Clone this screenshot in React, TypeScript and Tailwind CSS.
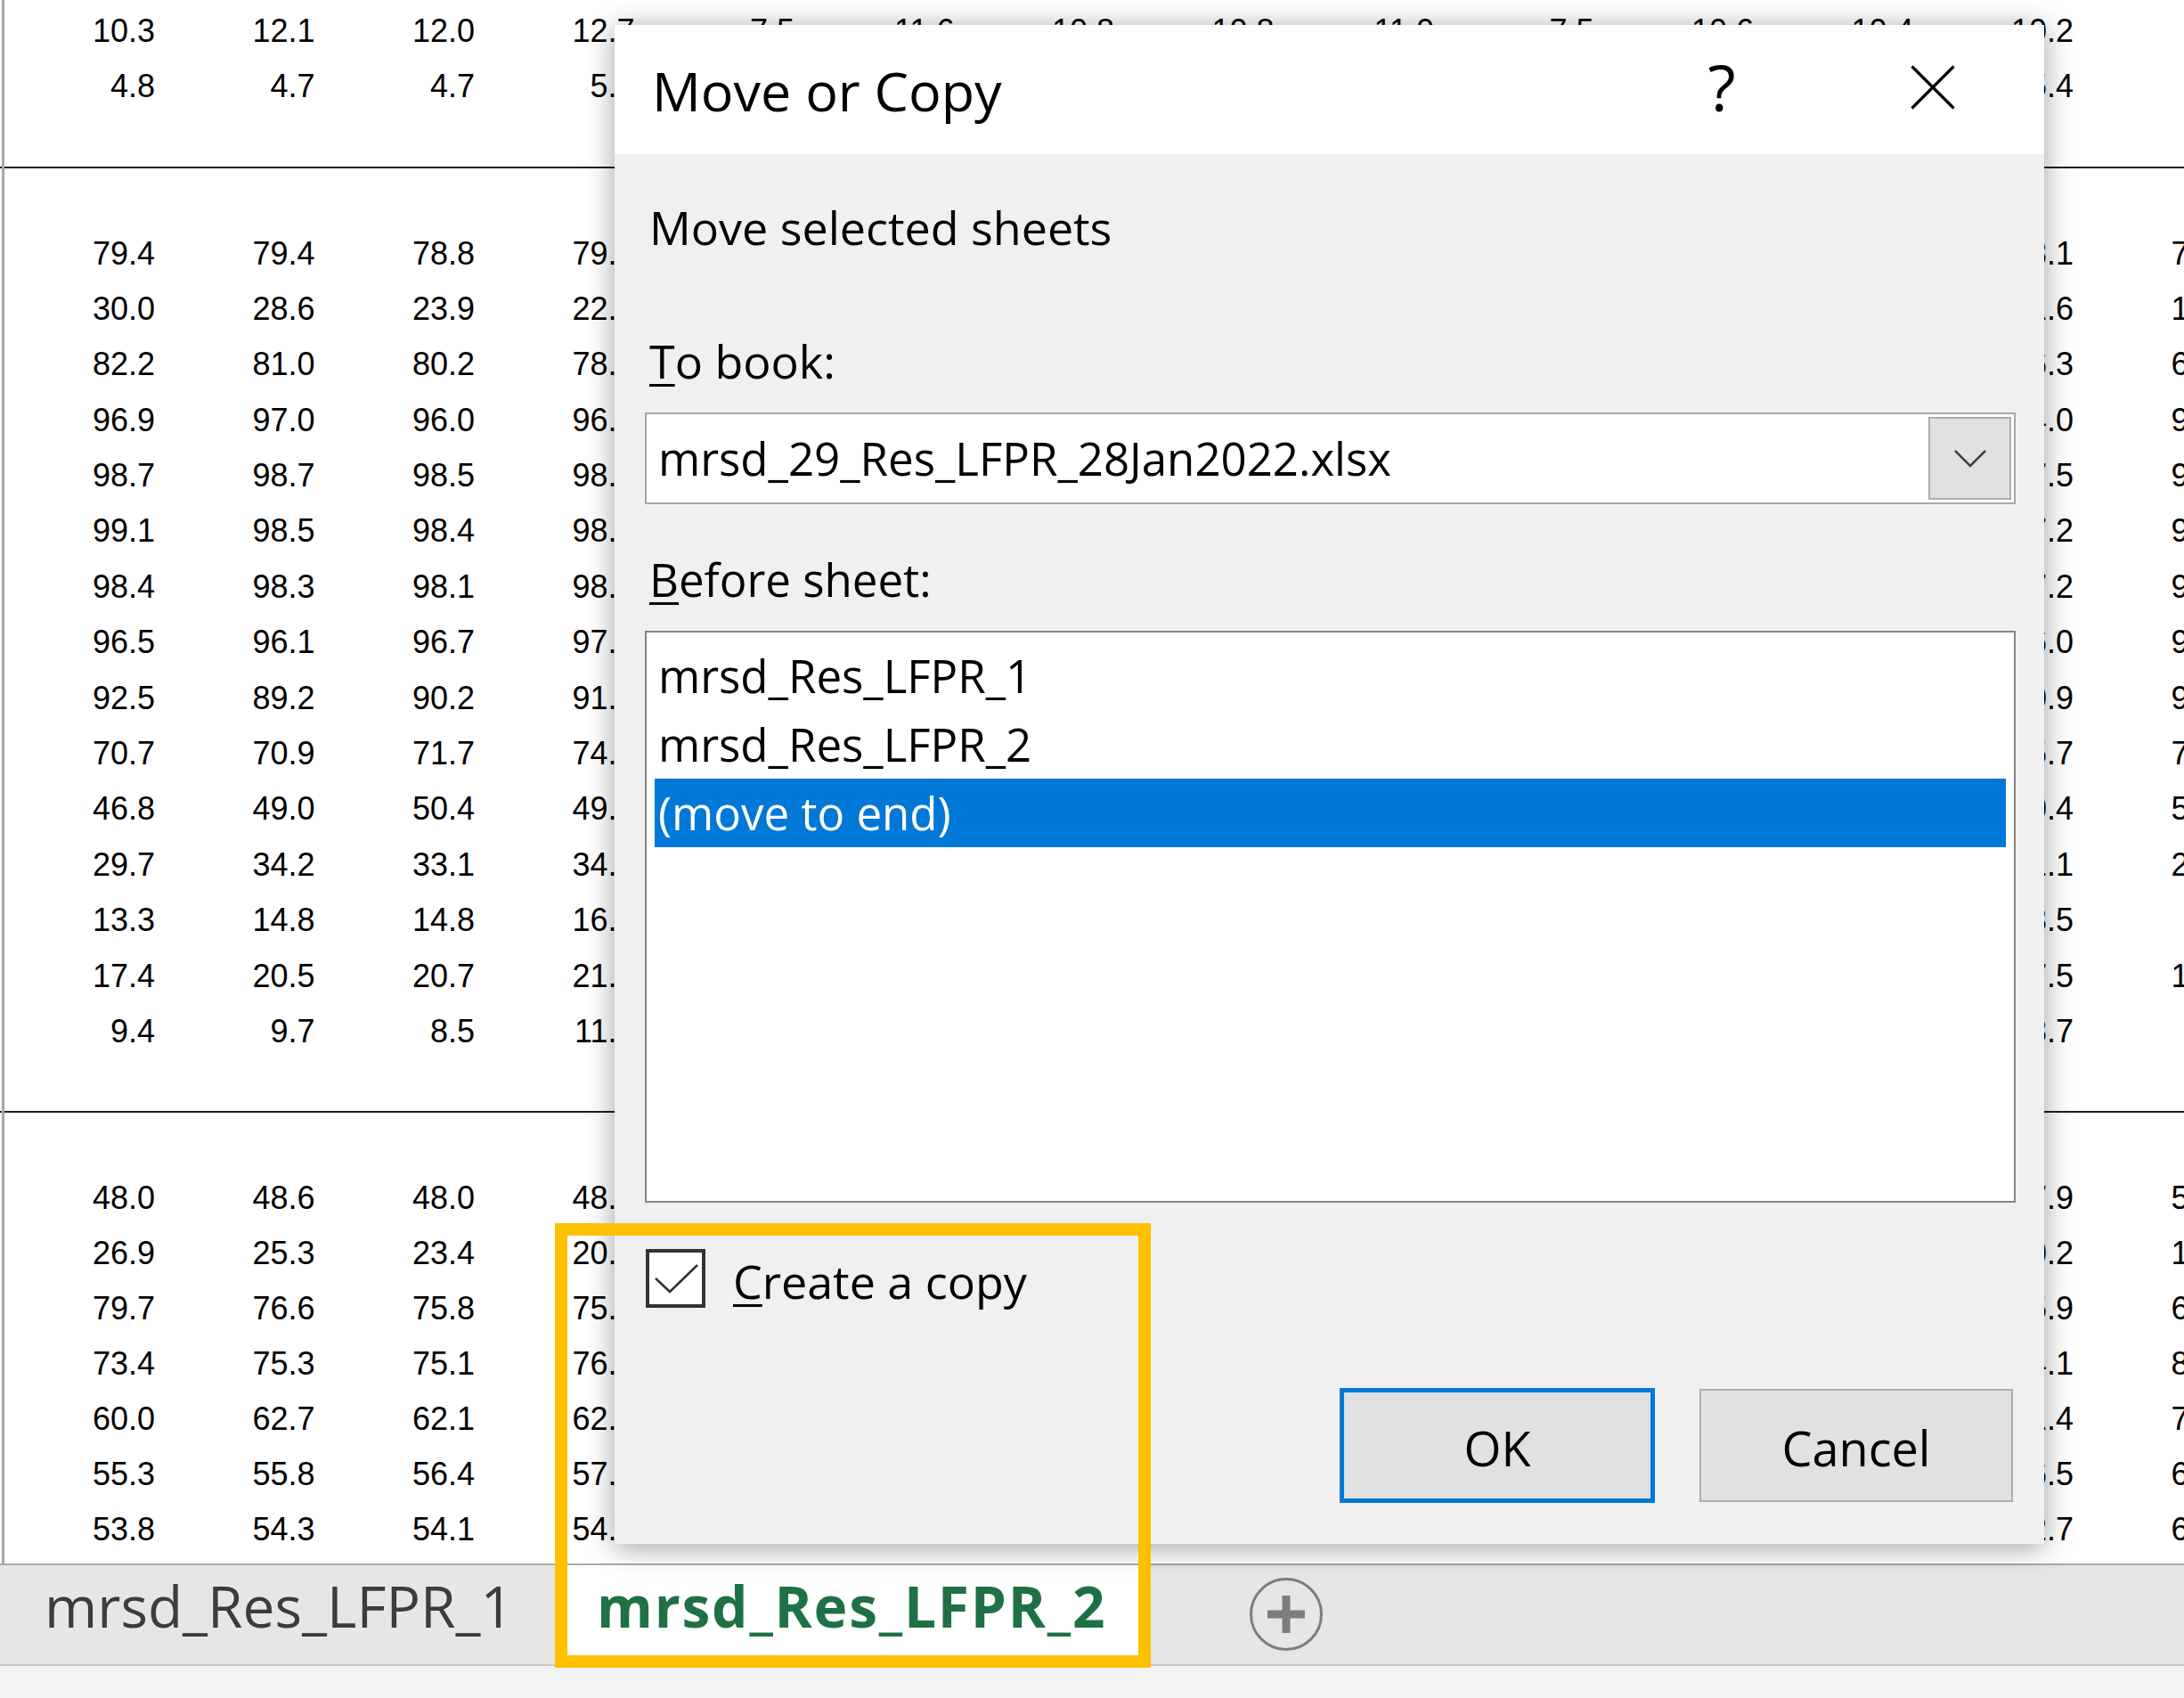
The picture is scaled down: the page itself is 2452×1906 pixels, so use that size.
import React from "react";

const g1: string[][] = [
  ["10.3", "12.1", "12.0", "12.7", "7.5", "11.6", "10.8", "10.8", "11.0", "7.5", "10.6", "10.4", "10.2", ""],
  ["4.8", "4.7", "4.7", "5.9", "3.6", "5.2", "5.0", "4.9", "5.1", "3.8", "5.3", "5.4", "5.4", ""],
];

const g2base: string[][] = [
  ["79.4", "79.4", "78.8", "79.3", "78.1", "75.2"],
  ["30.0", "28.6", "23.9", "22.5", "21.6", "17.4"],
  ["82.2", "81.0", "80.2", "78.9", "76.3", "68.2"],
  ["96.9", "97.0", "96.0", "96.4", "94.0", "92.5"],
  ["98.7", "98.7", "98.5", "98.2", "97.5", "95.8"],
  ["99.1", "98.5", "98.4", "98.0", "97.2", "96.1"],
  ["98.4", "98.3", "98.1", "98.1", "97.2", "95.4"],
  ["96.5", "96.1", "96.7", "97.0", "96.0", "94.3"],
  ["92.5", "89.2", "90.2", "91.3", "90.9", "90.1"],
  ["70.7", "70.9", "71.7", "74.1", "75.7", "73.6"],
  ["46.8", "49.0", "50.4", "49.5", "50.4", "52.7"],
  ["29.7", "34.2", "33.1", "34.6", "31.1", "28.9"],
  ["13.3", "14.8", "14.8", "16.0", "13.5", "9.8"],
  ["17.4", "20.5", "20.7", "21.3", "17.5", "15.2"],
  ["9.4", "9.7", "8.5", "11.2", "8.7", "7.9"],
];

const g3base: string[][] = [
  ["48.0", "48.6", "48.0", "48.5", "47.9", "50.2"],
  ["26.9", "25.3", "23.4", "20.1", "20.2", "16.8"],
  ["79.7", "76.6", "75.8", "75.4", "75.9", "64.3"],
  ["73.4", "75.3", "75.1", "76.3", "74.1", "80.5"],
  ["60.0", "62.7", "62.1", "62.5", "61.4", "70.2"],
  ["55.3", "55.8", "56.4", "57.2", "56.5", "62.0"],
  ["53.8", "54.3", "54.1", "54.2", "52.7", "60.4"],
];

function expand(rows: string[][]): string[][] {
  return rows.map((r) => {
    const mid: string[] = [];
    const a = parseFloat(r[3]);
    const b = parseFloat(r[4]);
    for (let i = 0; i < 8; i++) {
      const v = a + ((b - a) * (i + 1)) / 9 + ((i % 3) - 1) * 0.4;
      mid.push(v.toFixed(1));
    }
    return [r[0], r[1], r[2], r[3], ...mid, r[4], r[5]];
  });
}

const g2 = expand(g2base);
const g3 = expand(g3base);

function Row({ cells, h }: { cells: string[]; h: string }) {
  return (
    <div className={`grid grid-cols-[174px_repeat(13,179.5px)] ${h} text-[36px] text-black`}>
      {cells.map((c, i) => (
        <div key={i} className="text-right whitespace-nowrap">
          {c}
        </div>
      ))}
    </div>
  );
}

function Sheet() {
  return (
    <div className="h-[1755px] overflow-hidden relative bg-white font-['Liberation_Sans',Arial,sans-serif]">
      <div className="absolute left-[2px] top-0 bottom-0 w-[3px] bg-[#a6a6a6]" />
      <div className="pt-[4px]">
        {g1.map((r, i) => (
          <Row key={i} cells={r} h="h-[62px] leading-[62px]" />
        ))}
      </div>
      <div className="mt-[59px] h-[2px] bg-[#1f1f1f]" />
      <div className="mt-[64.5px]">
        {g2.map((r, i) => (
          <Row key={i} cells={r} h="h-[62.4px] leading-[62.4px]" />
        ))}
      </div>
      <div className="mt-[57.5px] h-[2px] bg-[#1f1f1f]" />
      <div className="mt-[65.5px]">
        {g3.map((r, i) => (
          <Row key={i} cells={r} h="h-[62px] leading-[62px]" />
        ))}
      </div>
    </div>
  );
}

function TabBar() {
  return (
    <div className="h-[115px] bg-[#e6e6e6] border-t-2 border-b-2 border-t-[#a9a9a9] border-b-[#c9c9c9] flex font-['Open_Sans',sans-serif]">
      <div className="w-[624px] pl-[50px] pt-[14px] text-[64px] leading-[64px] text-[#3c3c3c] whitespace-nowrap">
        mrsd_Res_LFPR_1
      </div>
      <div className="w-[668px] bg-white border-b-[3px] border-b-[#1e7145] pl-[46px] pt-[14px] text-[64px] leading-[64px] tracking-[1.8px] font-bold text-[#1e7145] whitespace-nowrap">
        mrsd_Res_LFPR_2
      </div>
      <div className="ml-[111px] mt-[14px] w-[82px] h-[82px] rounded-full border-[3px] border-[#7d7d7d] flex items-center justify-center">
        <svg width="42" height="42" viewBox="0 0 42 42">
          <rect x="0" y="16.5" width="42" height="9" fill="#7d7d7d" />
          <rect x="16.5" y="0" width="9" height="42" fill="#7d7d7d" />
        </svg>
      </div>
    </div>
  );
}

function Dialog() {
  return (
    <div className="absolute left-[690px] top-[28px] w-[1605px] h-[1705px] flex flex-col shadow-[0_4px_30px_rgba(0,0,0,0.38)] font-['Open_Sans',sans-serif] text-black">
      <div className="h-[145px] bg-white flex pl-[42px] pr-[100px]">
        <div className="mt-[43px] text-[61px] leading-[61px] whitespace-nowrap">Move or Copy</div>
        <div className="flex-1" />
        <div className="mt-[33px] w-[60px] text-center text-[72px] leading-[72px]">?</div>
        <div className="ml-[182px] mt-[45px] w-[50px] h-[50px]">
          <svg width="50" height="50" viewBox="0 0 50 50">
            <path d="M1.5 1.5 L48.5 48.5 M48.5 1.5 L1.5 48.5" stroke="#000" strokeWidth="3.2" fill="none" />
          </svg>
        </div>
      </div>
      <div className="flex-1 bg-[#f0f0f0] flex flex-col">
        <div className="mt-[56px] ml-[39px] text-[52px] leading-[52px] whitespace-nowrap">Move selected sheets</div>
        <div className="mt-[98px] ml-[39px] text-[52px] leading-[52px] whitespace-nowrap">
          <span className="underline underline-offset-[6px] decoration-[3px]">T</span>o book:
        </div>
        <div className="mt-[32px] ml-[34px] w-[1539px] h-[103px] border-2 border-[#a7a7a7] bg-white flex items-center">
          <div className="flex-1 pl-[13px] text-[51px] leading-[51px] whitespace-nowrap">mrsd_29_Res_LFPR_28Jan2022.xlsx</div>
          <div className="mr-[3px] w-[93px] h-[93px] bg-[#e1e1e1] border-2 border-[#adadad] flex items-center justify-center">
            <svg width="38" height="22" viewBox="0 0 38 22">
              <path d="M2 2 L19 19 L36 2" stroke="#404040" strokeWidth="2.6" fill="none" />
            </svg>
          </div>
        </div>
        <div className="mt-[58px] ml-[39px] text-[51px] leading-[52px] whitespace-nowrap">
          <span className="underline underline-offset-[6px] decoration-[3px]">B</span>efore sheet:
        </div>
        <div className="mt-[32px] ml-[34px] w-[1539px] h-[642px] border-2 border-[#848484] bg-white pt-[10px] px-[9px]">
          <div className="h-[77px] leading-[77px] pl-[4px] text-[51px] whitespace-nowrap">mrsd_Res_LFPR_1</div>
          <div className="h-[77px] leading-[77px] pl-[4px] text-[51px] whitespace-nowrap">mrsd_Res_LFPR_2</div>
          <div className="h-[77px] leading-[77px] pl-[4px] text-[51px] whitespace-nowrap bg-[#0078d7] text-white">(move to end)</div>
        </div>
        <div className="mt-[52px] ml-[35px] flex items-start">
          <div className="w-[67px] h-[66px] border-[4px] border-[#333333] bg-white">
            <svg width="59" height="58" viewBox="0 0 59 58">
              <path d="M7 29 L23 44 L54 14" stroke="#333" strokeWidth="2.6" fill="none" />
            </svg>
          </div>
          <div className="ml-[31px] mt-[10px] text-[52px] leading-[52px] whitespace-nowrap">
            <span className="underline underline-offset-[6px] decoration-[3px]">C</span>reate a copy
          </div>
        </div>
        <div className="mt-[90px] flex justify-end items-center gap-[50px] pr-[35px]">
          <div className="w-[354px] h-[129px] border-[5px] border-[#0078d7] bg-[#e1e1e1] flex items-center justify-center pt-[4px] text-[54px] leading-[54px]">
            OK
          </div>
          <div className="w-[352px] h-[127px] border-2 border-[#adadad] bg-[#e1e1e1] flex items-center justify-center pt-[4px] text-[54px] leading-[54px]">
            Cancel
          </div>
        </div>
      </div>
    </div>
  );
}

export default function App() {
  return (
    <div className="relative w-[2452px] h-[1906px] overflow-hidden bg-white">
      <Sheet />
      <TabBar />
      <div className="h-[36px] bg-[#f3f3f3]" />
      <Dialog />
      <div className="absolute left-[623px] top-[1373px] w-[669px] h-[499px] border-[14px] border-[#ffc000]" />
    </div>
  );
}
